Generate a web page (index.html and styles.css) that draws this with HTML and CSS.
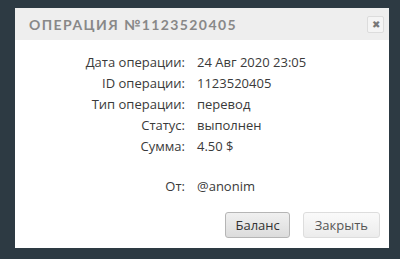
FILE: index.html
```html
<!DOCTYPE html>
<html lang="ru">
<head>
<meta charset="UTF-8" />
<title>Операция</title>
<link rel="stylesheet" href="styles.css">
</head>
<body>
<div class="dialog">
	<div class="head">
		<span class="title">Операция №1123520405</span>
		<span class="close">&#x2716;</span>
	</div>
	<div class="body">
		<div class="info">
			<span class="k">Дата операции:</span><span class="v">24 Авг 2020 23:05</span>
			<span class="k">ID операции:</span><span class="v">1123520405</span>
			<span class="k">Тип операции:</span><span class="v">перевод</span>
			<span class="k">Статус:</span><span class="v">выполнен</span>
			<span class="k">Сумма:</span><span class="v">4.50 $</span>
		</div>
		<div class="from">
			<span class="k">От:</span><span class="v">@anonim</span>
		</div>
		<div class="buttons">
			<button type="button" class="btn active">Баланс</button>
			<button type="button" class="btn">Закрыть</button>
		</div>
	</div>
</div>
</body>
</html>
```
FILE: styles.css
```css
body{
	margin: 0;
	background: #2d3a43;
	height: 259px;
	padding: 8px 0 0 15px;
	box-sizing: border-box;
	font-family: "Open Sans", "Liberation Sans", sans-serif;
}
.dialog{
	width: 374px;
	height: 240px;
	background: #fff;
	display: flex;
	flex-direction: column;
}
.head{
	height: 32px;
	background: #eeeeee;
	display: flex;
	align-items: center;
	justify-content: space-between;
	padding: 0 5px 0 14px;
}
.title{
	text-transform: uppercase;
	font-family: "Lato", sans-serif;
	font-weight: bold;
	font-size: 14px;
	letter-spacing: 1.4px;
	color: #888;
}
.close{
	width: 15px;
	height: 15px;
	border: 1px solid #dcdcdc;
	border-radius: 2px;
	background: #f4f4f4;
	color: #777;
	font-size: 10px;
	display: flex;
	align-items: center;
	justify-content: center;
}
.body{
	flex: 1;
	display: flex;
	flex-direction: column;
}
.info{
	display: grid;
	grid-template-columns: 170px auto;
	column-gap: 12px;
	row-gap: 3px;
	margin-top: 13px;
	font-size: 13px;
	line-height: 18px;
	color: #3a3a3a;
}
.k{
	text-align: right;
}
.from{
	display: grid;
	grid-template-columns: 170px auto;
	column-gap: 12px;
	margin-top: 22px;
	font-size: 13px;
	line-height: 18px;
	color: #3a3a3a;
}
.buttons{
	display: flex;
	justify-content: flex-end;
	gap: 13px;
	padding: 17px 9px 0 0;
}
.btn{
	font-family: "Open Sans", sans-serif;
	font-size: 13px;
	color: #555;
	height: 26px;
	padding: 0 11px;
	border: 1px solid #ddd;
	border-radius: 3px;
	background: linear-gradient(#fafafa, #ececec);
}
.btn.active{
	color: #333;
	border-color: #b5b5b5;
	background: linear-gradient(#f0f0f0, #dcdcdc);
	padding: 0 9px;
}
```
